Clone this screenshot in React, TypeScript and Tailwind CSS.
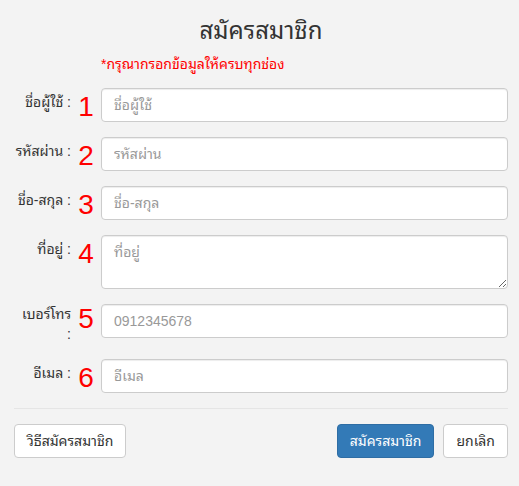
import React from 'react';

const fields = [
  { label: 'ชื่อผู้ใช้ :', num: '1', placeholder: 'ชื่อผู้ใช้', type: 'text' },
  { label: 'รหัสผ่าน :', num: '2', placeholder: 'รหัสผ่าน', type: 'password' },
  { label: 'ชื่อ-สกุล :', num: '3', placeholder: 'ชื่อ-สกุล', type: 'text' },
  { label: 'ที่อยู่ :', num: '4', placeholder: 'ที่อยู่', type: 'textarea' },
  { label: 'เบอร์โทร\n:', num: '5', placeholder: '0912345678', type: 'tel' },
  { label: 'อีเมล :', num: '6', placeholder: 'อีเมล', type: 'email' },
];

const inputCls =
  'block w-full rounded-[4px] border border-[#ccc] bg-white px-3 text-[14px] text-[#555] placeholder:text-[#999] shadow-[inset_0_1px_1px_rgba(0,0,0,0.075)] outline-none';

export default function App() {
  return (
    <div
      className="min-h-[486px] w-[519px] bg-[#f3f3f3] text-[#333]"
      style={{ fontFamily: '"Liberation Sans", "Noto Sans Thai Looped", sans-serif' }}
    >
      <div className="pl-[14px] pr-[11px]">
        <h3 className="pt-[17px] text-center text-[24px] leading-[28px] text-[#333]">สมัครสมาชิก</h3>
        <p className="mt-[9px] pl-[87px] text-[14px] leading-[20px] text-[#ff0000]">*กรุณากรอกข้อมูลให้ครบทุกช่อง</p>

        <form className="mt-[14px]" onSubmit={(e) => e.preventDefault()}>
          {fields.map((f) => {
            // the phone label wraps onto two lines and sits a little higher
            const wrapped = f.label.includes('\n');
            return (
              <div key={f.num} className="mb-[15px] flex items-start">
                <label
                  className={
                    'w-[57px] shrink-0 whitespace-pre-line text-right text-[14px] leading-[20px] text-[#333] ' +
                    (wrapped ? 'pt-0' : 'pt-[4px]')
                  }
                >
                  {f.label}
                </label>
                <span
                  className={
                    'w-[30px] shrink-0 text-center text-[28px] leading-[30px] text-[#ff0000] ' +
                    (wrapped ? 'pt-0' : 'pt-[4px]')
                  }
                >
                  {f.num}
                </span>
                <div className="flex-1">
                  {f.type === 'textarea' ? (
                    <textarea rows={2} placeholder={f.placeholder} className={inputCls + ' h-[54px] py-[6px] leading-[20px]'} />
                  ) : (
                    <input type={f.type === 'password' ? 'text' : f.type} placeholder={f.placeholder} className={inputCls + ' h-[34px] py-[6px]'} />
                  )}
                </div>
              </div>
            );
          })}
        </form>

        <div className="flex items-center border-t border-[#e5e5e5] pt-[15px]">
          <button className="h-[34px] rounded-[4px] border border-[#ccc] bg-white px-3 text-[14px] text-[#333]">
            วิธีสมัครสมาชิก
          </button>
          <div className="ml-auto flex gap-[9px]">
            <button className="h-[34px] rounded-[4px] border border-[#2e6da4] bg-[#337ab7] px-3 text-[14px] text-white">
              สมัครสมาชิก
            </button>
            <button className="h-[34px] rounded-[4px] border border-[#ccc] bg-white px-3 text-[14px] text-[#333]">
              ยกเลิก
            </button>
          </div>
        </div>
      </div>
    </div>
  );
}
